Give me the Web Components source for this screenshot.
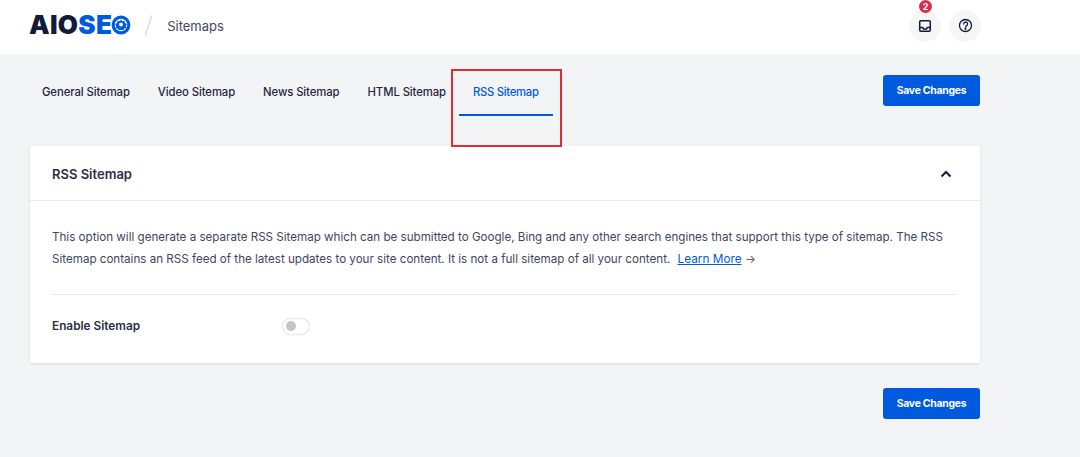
<!DOCTYPE html>
<html><head><meta charset="utf-8">
<style>
html,body{margin:0;padding:0;height:457px;overflow:hidden}
body{background:#f3f4f5;font-family:Inter,"Noto Sans",sans-serif;color:#141b38}
</style></head><body>
<template id="t-header"><style>
:host{display:flex;align-items:center;height:54px;background:#fff;padding:0 99px 0 29px;box-sizing:border-box;position:relative}
.logo{display:flex;align-items:center;font-family:Inter,sans-serif;font-weight:900;font-size:26px;letter-spacing:.3px;line-height:24px;color:#141b38;margin-top:-5px}
.logo b{font-weight:900;color:#005ae0}
.logo svg{margin-left:-1px}
.sep{width:1px;height:21px;margin:-3px 0 0 17px;transform:rotate(18deg);background:#d0d1d7}
.crumb{margin:-3px 0 0 18px;font-size:13px;color:#434960}
.spacer{flex:1}
.ic{width:32px;height:32px;border-radius:50%;background:#f6f6f7;display:flex;align-items:center;justify-content:center;position:relative;margin:-3px 0 0 8px}
.badge{position:absolute;left:10px;top:-10px;width:13px;height:13px;border-radius:50%;background:#df2a4a;color:#fff;font-size:9px;font-weight:700;line-height:13px;text-align:center}
</style>
<div class="logo">AIO<b>SE</b><svg width="20" height="20" viewBox="0 0 20 20"><circle cx="10" cy="10" r="7.8" fill="none" stroke="#005ae0" stroke-width="3.2"/><path d="M10 4.5l1.3 1.8 2.2-.5.4 2.2 2 1-1.2 2 .7 2-2.2.5-.6 1.5H7.4l-.6-1.5-2.2-.5.7-2-1.2-2 2-1 .4-2.2 2.2.5z" fill="#005ae0"/><circle cx="10" cy="9.6" r="2" fill="#fff"/></svg></div>
<div class="sep"></div><div class="crumb">Sitemaps</div><div class="spacer"></div>
<div class="ic"><span class="badge">2</span><svg width="14" height="14" viewBox="0 0 14 14" fill="none" stroke="#141b38" stroke-width="1.5"><rect x="1.7" y="1.7" width="10.6" height="10.6" rx="1.2"/><path d="M1.7 8.4h3l.8 1.5h3l.8-1.5h3"/></svg></div>
<div class="ic"><svg width="15" height="15" viewBox="0 0 15 15" fill="none" stroke="#141b38" stroke-width="1.3"><circle cx="7.5" cy="7.5" r="6"/><path d="M5.6 6a2 2 0 1 1 2.9 1.8c-.6.3-1 .7-1 1.4" stroke-linecap="round"/><circle cx="7.5" cy="10.9" r=".4"/></svg></div>
</template>

<template id="t-btn"><style>
:host{display:inline-flex;align-items:center;justify-content:center;width:97px;height:31px;background:#005ae0;color:#fff;border-radius:3px;font-size:10.4px;font-weight:700;letter-spacing:-.25px;box-sizing:border-box}
</style><slot></slot></template>

<template id="t-tabs"><style>
:host{display:flex;align-items:flex-start;justify-content:space-between;height:92px;box-sizing:border-box;padding:21px 0 0 0}
nav{display:flex;padding-left:12px;gap:28px}
</style><nav><slot></slot></nav><slot name="action"></slot></template>

<template id="t-tab"><style>
:host{display:block;font-size:11.3px;font-weight:500;color:#1f2640;height:41px;line-height:35px;white-space:nowrap;letter-spacing:-.08px;position:relative}
:host([active]){color:#005ae0;letter-spacing:-.3px;padding:0 14px;margin-left:-15px;margin-right:-14px;box-shadow:inset 0 -2px 0 #005ae0}
</style><slot></slot></template>

<template id="t-card"><style>
:host{display:block;background:#fff;box-shadow:0 1px 3px rgba(0,0,0,.1);height:217px;border-radius:2px}
header{display:flex;align-items:center;justify-content:space-between;height:52px;padding:2px 28px 0 22px;border-bottom:1px solid #e8e8eb;font-size:13px;font-weight:600;color:#2a3048}
.body{padding:25px 24px 0 22px}
</style><header><span><slot name="title"></slot></span><svg width="12" height="8" viewBox="0 0 12 8" fill="none" stroke="#141b38" stroke-width="2"><path d="M1.5 6.5L6 2l4.5 4.5"/></svg></header><div class="body"><slot></slot></div></template>

<template id="t-desc"><style>
:host{display:block;font-size:11.62px;line-height:22px;color:#3f4660;padding-bottom:24px;border-bottom:1px solid #e8e8eb}
::slotted(span){display:block;white-space:nowrap}
</style><slot></slot></template>

<template id="t-link"><style>
:host{display:inline;color:#005ae0;text-decoration:underline;margin-left:4px;font-size:11.8px}
</style><slot></slot></template>

<template id="t-setting"><style>
:host{display:flex;align-items:center;height:62px;font-size:11.8px;font-weight:600;color:#2a3048}
.l{width:231px;flex:none}
.sw{width:26px;height:15px;border-radius:8px;background:#fff;box-shadow:0 0 2px rgba(0,0,0,.35);position:relative;flex:none}
.sw::after{content:"";position:absolute;left:3px;top:2.5px;width:10px;height:10px;border-radius:50%;background:#c4c5cc}
</style><div class="l"><slot></slot></div><div class="sw"></div></template>

<template id="t-page"><style>
:host{display:block;padding:0 100px 0 30px}
.foot{display:flex;justify-content:flex-end;margin-top:25px}
.mark{position:absolute;left:451px;top:69px;width:111px;height:78px;box-sizing:border-box;border:2px solid #e02a35;pointer-events:none}
</style><slot name="tabs"></slot><slot name="card"></slot><div class="foot"><slot name="foot"></slot></div><div class="mark"></div></template>

<script>
for (const [tag,tpl] of [["aio-header","t-header"],["aio-btn","t-btn"],["aio-tabs","t-tabs"],["aio-tab","t-tab"],["aio-card","t-card"],["aio-desc","t-desc"],["aio-link","t-link"],["aio-setting","t-setting"],["aio-page","t-page"]]) {
  customElements.define(tag,class extends HTMLElement{constructor(){super();this.attachShadow({mode:"open"}).appendChild(document.getElementById(tpl).content.cloneNode(true));}});
}
</script>
<aio-header></aio-header>
<aio-page>
<aio-tabs slot="tabs">
<aio-tab>General Sitemap</aio-tab><aio-tab>Video Sitemap</aio-tab><aio-tab>News Sitemap</aio-tab><aio-tab>HTML Sitemap</aio-tab><aio-tab active>RSS Sitemap</aio-tab>
<aio-btn slot="action">Save Changes</aio-btn>
</aio-tabs>
<aio-card slot="card"><span slot="title">RSS Sitemap</span>
<aio-desc><span>This option will generate a separate RSS Sitemap which can be submitted to Google, Bing and any other search engines that support this type of sitemap. The RSS</span><span>Sitemap contains an RSS feed of the latest updates to your site content. It is not a full sitemap of all your content. <aio-link>Learn More</aio-link> <b style="font-weight:400;color:#5a6178">→</b></span></aio-desc>
<aio-setting>Enable Sitemap</aio-setting>
</aio-card>
<aio-btn slot="foot">Save Changes</aio-btn>
</aio-page>
</body></html>
